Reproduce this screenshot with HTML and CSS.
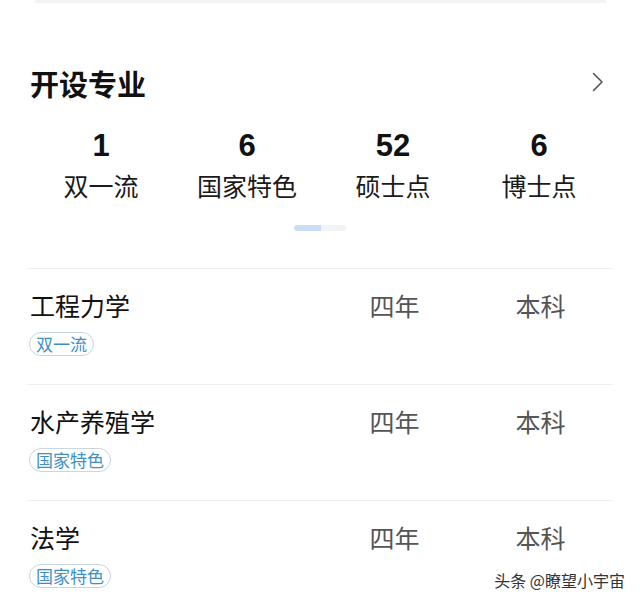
FILE: index.html
```html
<!DOCTYPE html>
<html lang="zh-CN">
<head>
<meta charset="utf-8">
<title>开设专业</title>
<link rel="stylesheet" href="styles.css">
</head>
<body>
<div class="page">
  <div class="top-bar"></div>
  <div class="header">
    <h2 class="title">开设专业</h2>
    <svg class="chevron" width="12" height="20" viewBox="0 0 12 20"><path d="M1.5 1.5 L10 10 L1.5 18.5" fill="none" stroke="#555" stroke-width="1.6" stroke-linecap="round" stroke-linejoin="round"/></svg>
  </div>
  <div class="stats">
    <div class="stat"><div class="num">1</div><div class="label">双一流</div></div>
    <div class="stat"><div class="num">6</div><div class="label">国家特色</div></div>
    <div class="stat"><div class="num">52</div><div class="label">硕士点</div></div>
    <div class="stat"><div class="num">6</div><div class="label">博士点</div></div>
  </div>
  <div class="pager"><span class="pager-on"></span><span class="pager-off"></span></div>
  <div class="list">
    <div class="row">
      <div class="main"><div class="name">工程力学</div><span class="tag">双一流</span></div>
      <div class="cell">四年</div>
      <div class="cell">本科</div>
    </div>
    <div class="row">
      <div class="main"><div class="name">水产养殖学</div><span class="tag">国家特色</span></div>
      <div class="cell">四年</div>
      <div class="cell">本科</div>
    </div>
    <div class="row">
      <div class="main"><div class="name">法学</div><span class="tag">国家特色</span></div>
      <div class="cell">四年</div>
      <div class="cell">本科</div>
    </div>
  </div>
  <div class="watermark">头条 @瞭望小宇宙</div>
</div>
</body>
</html>
```
FILE: styles.css
```css
html, body {
  margin: 0;
  padding: 0;
  background: #fff;
}
body {
  font-family: "Noto Sans CJK SC", "Noto Sans", sans-serif;
  color: #111;
}
.page {
  position: relative;
  width: 640px;
  height: 602px;
  overflow: hidden;
}
.top-bar {
  height: 3px;
  margin: 0 34px 0 35px;
  background: #f3f3f3;
}
.header {
  display: flex;
  align-items: center;
  justify-content: space-between;
  margin-top: 60px;
  padding: 0 36px 0 30px;
  height: 40px;
}
.title {
  margin: 0;
  font-size: 29px;
  line-height: 40px;
  font-weight: 700;
  color: #111;
}
.chevron {
  display: block;
  margin-top: -2px;
}
.stats {
  display: grid;
  grid-template-columns: repeat(4, 1fr);
  margin: 25px 28px 0;
}
.stat {
  display: flex;
  flex-direction: column;
  align-items: center;
}
.num {
  font-family: "Liberation Sans", Arial, sans-serif;
  font-weight: 700;
  font-size: 31px;
  line-height: 36px;
  color: #111;
}
.label {
  margin-top: 4px;
  font-size: 25px;
  line-height: 34px;
  color: #1a1a1a;
}
.pager {
  display: flex;
  justify-content: center;
  margin-top: 23px;
  height: 6px;
}
.pager-on {
  width: 27px;
  height: 6px;
  background: #cadcf3;
  border-radius: 3px 0 0 3px;
}
.pager-off {
  width: 25px;
  height: 6px;
  background: #f1f3f6;
  border-radius: 0 3px 3px 0;
}
.list {
  margin: 37px 28px 0;
}
.row {
  display: grid;
  grid-template-columns: 1fr 146px 146px;
  border-top: 1px solid #efefef;
  padding: 19px 0 28px;
}
.main {
  display: flex;
  flex-direction: column;
  align-items: flex-start;
  padding-left: 2px;
}
.name {
  font-size: 25px;
  line-height: 34px;
  color: #111;
}
.tag {
  margin-top: 10px;
  height: 22px;
  line-height: 22px;
  padding: 0 6px;
  border: 1px solid #c6d6e3;
  border-radius: 12px;
  font-size: 17px;
  color: #3f8fc4;
  margin-left: -1px;
}
.cell {
  text-align: center;
  font-size: 25px;
  line-height: 34px;
  color: #555;
  padding-left: 3px;
}
.watermark {
  position: absolute;
  right: 15px;
  bottom: 12px;
  font-size: 16px;
  line-height: 20px;
  color: #333;
  text-shadow: 0 0 2px #fff;
}
```
